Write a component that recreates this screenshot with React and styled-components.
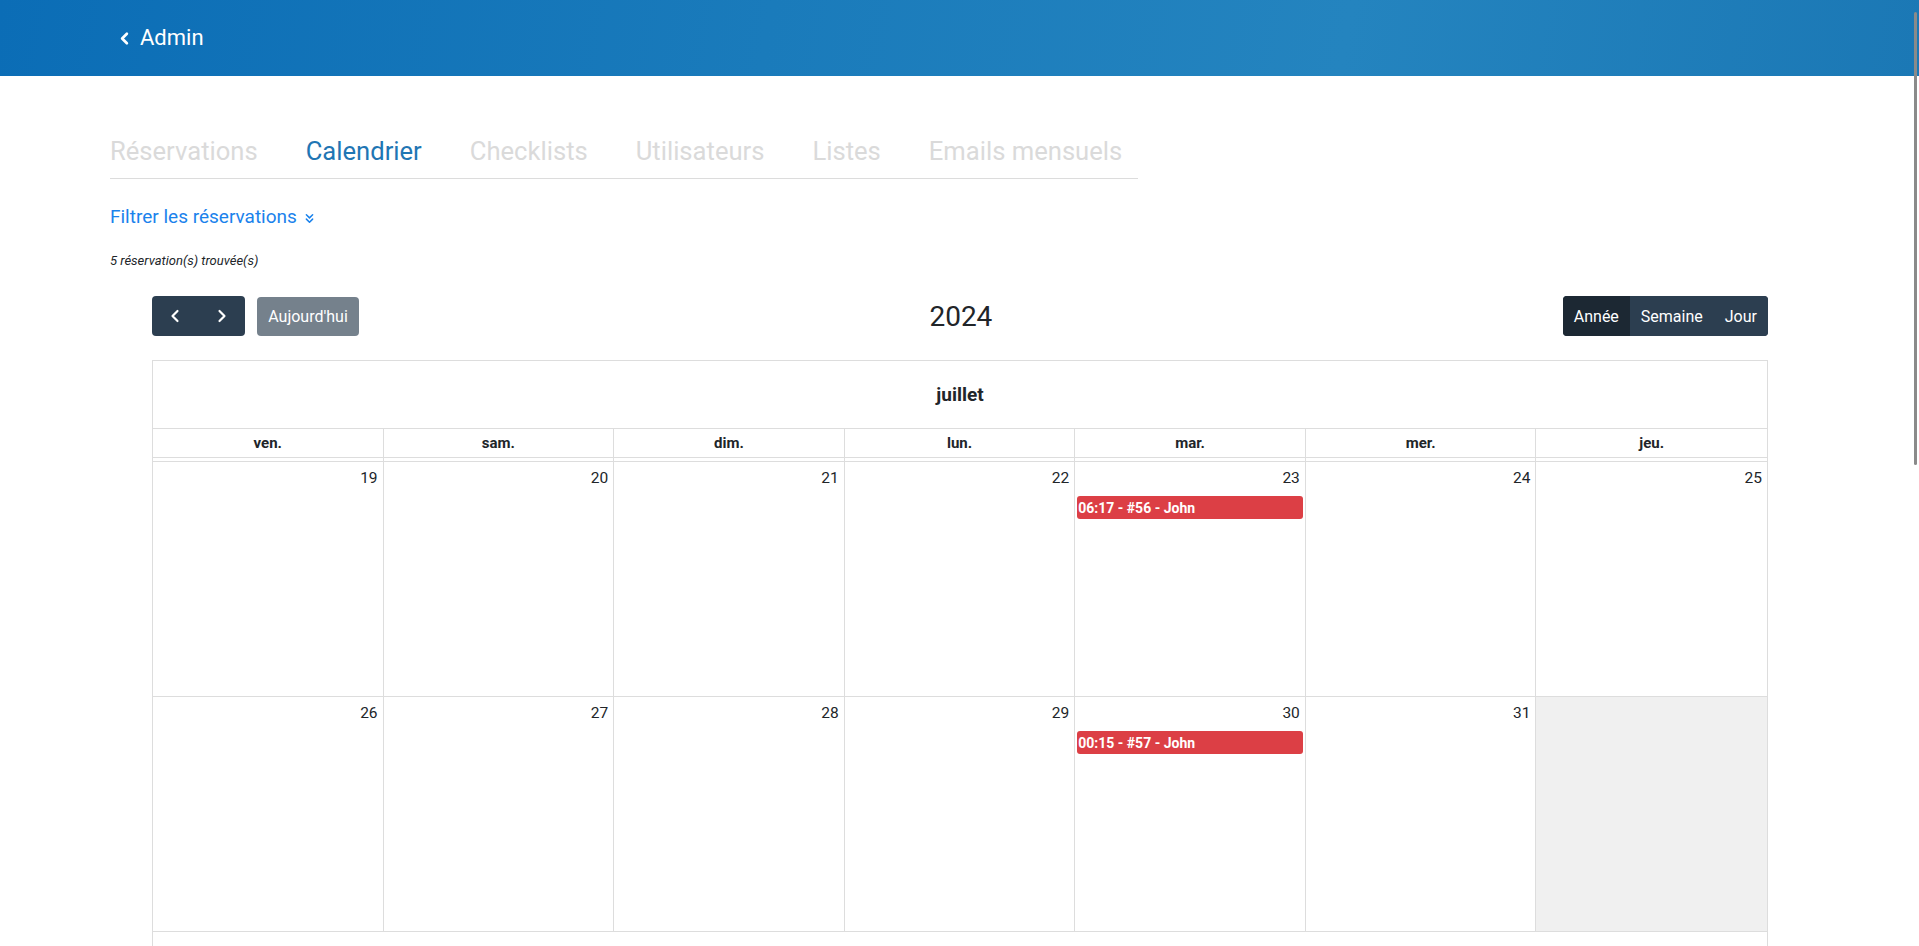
import React from 'react';
import styled, { createGlobalStyle } from 'styled-components';
import { ChevronLeft, ChevronRight, ChevronsDown } from 'lucide-react';

const GlobalStyle = createGlobalStyle`
  html, body {
    margin: 0;
    padding: 0;
    overflow: hidden;
    background: #fff;
  }
  body {
    font-family: Roboto, "Liberation Sans", sans-serif;
    color: #212529;
  }
  * { box-sizing: border-box; }
`;

const TABS = ['Réservations', 'Calendrier', 'Checklists', 'Utilisateurs', 'Listes', 'Emails mensuels'];
const DAYS = ['ven.', 'sam.', 'dim.', 'lun.', 'mar.', 'mer.', 'jeu.'];

const WEEKS = [
  [
    { n: 19 }, { n: 20 }, { n: 21 }, { n: 22 },
    { n: 23, event: '06:17 - #56 - John' }, { n: 24 }, { n: 25 },
  ],
  [
    { n: 26 }, { n: 27 }, { n: 28 }, { n: 29 },
    { n: 30, event: '00:15 - #57 - John' }, { n: 31 }, { off: true },
  ],
];

const App = () => {
  return (
    <>
      <GlobalStyle />
      <TopBar>
        <BackLink>
          <ChevronLeft size={19} strokeWidth={3.4} />
          Admin
        </BackLink>
      </TopBar>

      <Page>
        <Tabs>
          {TABS.map((t) => (
            <Tab key={t} $active={t === 'Calendrier'}>{t}</Tab>
          ))}
        </Tabs>

        <FilterLink>
          Filtrer les réservations
          <ChevronsDown size={15} strokeWidth={2.4} />
        </FilterLink>

        <Count>5 réservation(s) trouvée(s)</Count>

        <CalendarWrap>
          <Toolbar>
            <ToolGroup>
              <ButtonGroup>
                <NavButton aria-label="précédent">
                  <ChevronLeft size={20} strokeWidth={2.6} />
                </NavButton>
                <NavButton aria-label="suivant">
                  <ChevronRight size={20} strokeWidth={2.6} />
                </NavButton>
              </ButtonGroup>
              <TodayButton>Aujourd'hui</TodayButton>
            </ToolGroup>
            <Title>2024</Title>
            <ButtonGroup>
              <ViewButton $active>Année</ViewButton>
              <ViewButton>Semaine</ViewButton>
              <ViewButton>Jour</ViewButton>
            </ButtonGroup>
          </Toolbar>

          <Calendar>
            <MonthTitle>juillet</MonthTitle>
            <WeekHead>
              {DAYS.map((d) => (
                <HeadCell key={d}>
                  <HeadLabel>{d}</HeadLabel>
                </HeadCell>
              ))}
            </WeekHead>
            <Body>
              {WEEKS.map((week, i) => (
                <WeekRow key={i}>
                  {week.map((day, j) => (
                    <DayCell key={j} $off={day.off}>
                      {day.n && <DayNumber>{day.n}</DayNumber>}
                      {day.event && <Event>{day.event}</Event>}
                    </DayCell>
                  ))}
                </WeekRow>
              ))}
            </Body>
          </Calendar>
        </CalendarWrap>
      </Page>

      <ScrollThumb />
    </>
  );
};

const TopBar = styled.header`
  height: 76px;
  display: flex;
  align-items: center;
  padding-left: 115px;
  background: linear-gradient(100deg, #0b6db6 0%, #1a7bbb 40%, #2484bf 70%, #1b78b5 100%);
`;

const BackLink = styled.a`
  display: inline-flex;
  align-items: center;
  gap: 6px;
  color: #fff;
  font-size: 22px;
  line-height: 1;
  cursor: pointer;
`;

const Page = styled.main`
  padding: 0 110px;
`;

const Tabs = styled.nav`
  display: flex;
  gap: 48px;
  width: fit-content;
  margin-top: 57px;
  padding: 0 16px 8px 0;
  border-bottom: 1px solid #dcdcdc;
`;

const Tab = styled.span`
  font-size: 25.6px;
  line-height: 37px;
  color: ${(p) => (p.$active ? '#1f76b4' : '#dadada')};
  cursor: pointer;
`;

const FilterLink = styled.a`
  display: inline-flex;
  align-items: center;
  gap: 5px;
  margin-top: 24px;
  font-size: 19px;
  line-height: 28px;
  color: #1a82ec;
  cursor: pointer;

  svg { margin-top: 2px; }
`;

const Count = styled.p`
  margin: 20px 0 0;
  font-size: 13px;
  line-height: 19px;
  font-style: italic;
  color: #212529;
`;

const CalendarWrap = styled.section`
  margin: 26px 41px 0 42px;
`;

const Toolbar = styled.div`
  display: flex;
  align-items: center;
  justify-content: space-between;
  margin-bottom: 24px;
`;

const ToolGroup = styled.div`
  display: flex;
  align-items: center;
  gap: 12px;
`;

const ButtonGroup = styled.div`
  display: inline-flex;
  border-radius: 4px;
  overflow: hidden;
  background: #2c3e50;
`;

const BaseButton = styled.button`
  height: 40px;
  border: 0;
  color: #fff;
  font-family: Roboto, "Liberation Sans", sans-serif;
  font-size: 16px;
  cursor: pointer;
  display: inline-flex;
  align-items: center;
  justify-content: center;
`;

const NavButton = styled(BaseButton)`
  width: 46.5px;
  background: transparent;
`;

const TodayButton = styled(BaseButton)`
  width: 102px;
  height: 39px;
  border-radius: 4px;
  background: #2c3e50;
  opacity: 0.65;
`;

const ViewButton = styled(BaseButton)`
  padding: 0 11px;
  background: ${(p) => (p.$active ? '#1c2833' : '#2c3e50')};
`;

const Title = styled.h2`
  margin: 0;
  font-size: 28px;
  font-weight: 400;
  color: #212529;
`;

const Calendar = styled.div`
  border: 1px solid #dddddd;
  border-bottom: 0;
  padding-bottom: 60px;
`;

const MonthTitle = styled.div`
  height: 68px;
  display: flex;
  align-items: center;
  justify-content: center;
  font-size: 19px;
  font-weight: 700;
  border-bottom: 1px solid #dddddd;
`;

const WeekHead = styled.div`
  display: grid;
  grid-template-columns: repeat(7, 1fr);
`;

const HeadCell = styled.div`
  height: 32px;
  padding-bottom: 3px;
  border-right: 1px solid #dddddd;

  &:last-child { border-right: 0; }
`;

const HeadLabel = styled.div`
  height: 29px;
  display: flex;
  align-items: center;
  justify-content: center;
  font-size: 15px;
  font-weight: 700;
  border-bottom: 1px solid #dddddd;
`;

const Body = styled.div`
  border-top: 1px solid #dddddd;
`;

const WeekRow = styled.div`
  display: grid;
  grid-template-columns: repeat(7, 1fr);
  border-bottom: 1px solid #dddddd;
`;

const DayCell = styled.div`
  height: 234px;
  padding: 4px 2px 0;
  display: flex;
  flex-direction: column;
  border-right: 1px solid #dddddd;
  background: ${(p) => (p.$off ? '#f0f0f0' : '#fff')};

  &:last-child { border-right: 0; }
`;

const DayNumber = styled.span`
  align-self: flex-end;
  padding-right: 3px;
  font-size: 15.5px;
  line-height: 24px;
  color: #212529;
`;

const Event = styled.div`
  margin-top: 6px;
  height: 23px;
  padding: 0 1px;
  display: flex;
  align-items: center;
  border-radius: 3px;
  background: #dc3f45;
  color: #fff;
  font-size: 14px;
  font-weight: 700;
  white-space: nowrap;
  overflow: hidden;
`;

const ScrollThumb = styled.div`
  position: fixed;
  top: 12px;
  right: 2px;
  width: 3px;
  height: 453px;
  border-radius: 2px;
  background: #8a8a8a;
`;

export default App;
